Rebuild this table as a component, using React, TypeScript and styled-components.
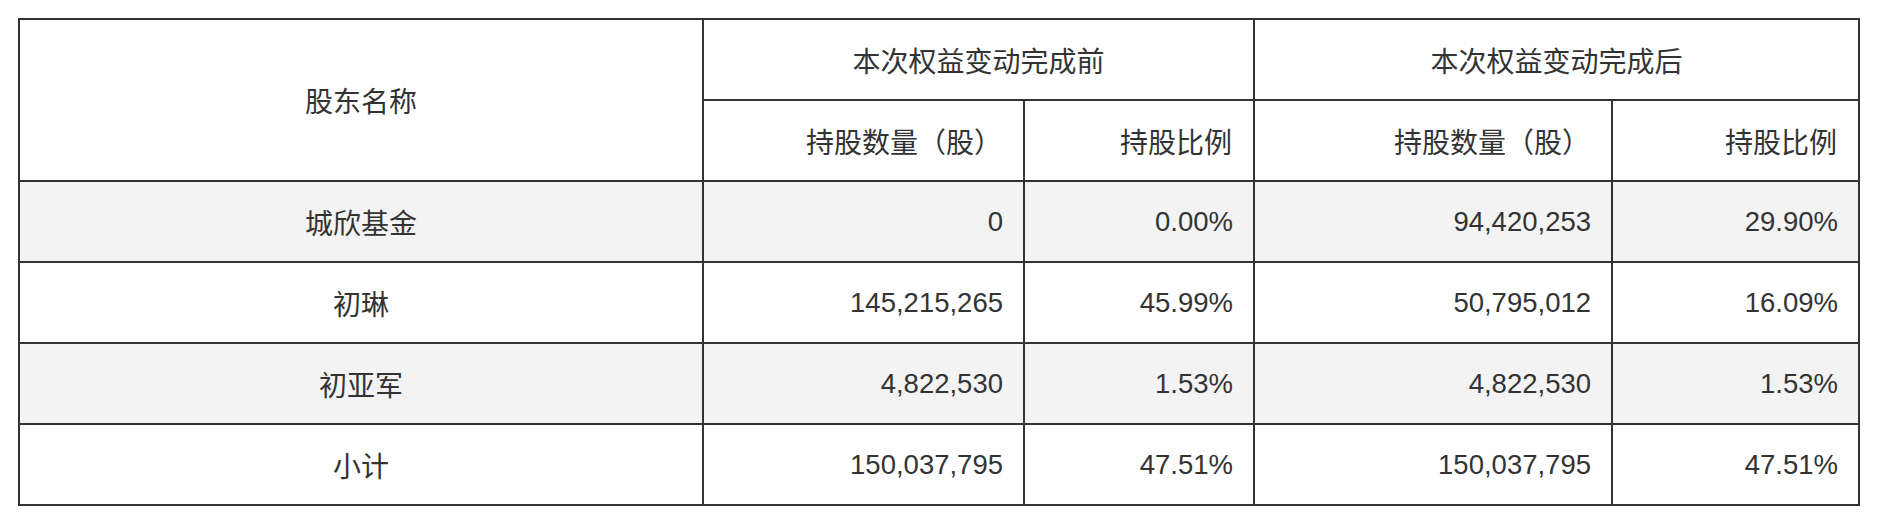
import React from 'react';
import styled, { createGlobalStyle } from 'styled-components';

const GlobalStyle = createGlobalStyle`
  html, body {
    margin: 0;
    padding: 0;
    background: #fff;
  }
  body {
    font-family: 'Liberation Sans', 'Noto Sans CJK SC', sans-serif;
    color: #333;
  }
`;

const Page = styled.div`
  padding: 18px;
`;

const Table = styled.table`
  width: 1842px;
  border-collapse: collapse;
  table-layout: fixed;
  font-size: 28px;
  color: #333;
`;

const Row = styled.tr<{ $shaded?: boolean }>`
  height: 81px;
  background: ${({ $shaded }) => ($shaded ? '#f3f3f3' : '#fff')};
`;

const HeadCell = styled.th<{ $align?: 'center' | 'right' }>`
  border: 2px solid #333;
  font-weight: normal;
  padding: 0 21px;
  text-align: ${({ $align }) => $align || 'center'};
  vertical-align: middle;
`;

const Cell = styled.td<{ $align?: 'center' | 'right'; $num?: boolean }>`
  border: 2px solid #333;
  padding: 0 20px;
  font-size: ${({ $num }) => ($num ? '27.5px' : '28px')};
  text-align: ${({ $align }) => $align || 'right'};
  vertical-align: middle;
  white-space: nowrap;
`;

interface Holder {
  name: string;
  beforeShares: string;
  beforeRatio: string;
  afterShares: string;
  afterRatio: string;
}

const holders: Holder[] = [
  { name: '城欣基金', beforeShares: '0', beforeRatio: '0.00%', afterShares: '94,420,253', afterRatio: '29.90%' },
  { name: '初琳', beforeShares: '145,215,265', beforeRatio: '45.99%', afterShares: '50,795,012', afterRatio: '16.09%' },
  { name: '初亚军', beforeShares: '4,822,530', beforeRatio: '1.53%', afterShares: '4,822,530', afterRatio: '1.53%' },
  { name: '小计', beforeShares: '150,037,795', beforeRatio: '47.51%', afterShares: '150,037,795', afterRatio: '47.51%' },
];

const App: React.FC = () => {
  return (
    <Page>
      <GlobalStyle />
      <Table>
        <colgroup>
          <col style={{ width: 684 }} />
          <col style={{ width: 321 }} />
          <col style={{ width: 230 }} />
          <col style={{ width: 358 }} />
          <col style={{ width: 247 }} />
        </colgroup>
        <thead>
          <Row>
            <HeadCell rowSpan={2}>股东名称</HeadCell>
            <HeadCell colSpan={2}>本次权益变动完成前</HeadCell>
            <HeadCell colSpan={2}>本次权益变动完成后</HeadCell>
          </Row>
          <Row>
            <HeadCell $align='right'>持股数量（股）</HeadCell>
            <HeadCell $align='right'>持股比例</HeadCell>
            <HeadCell $align='right'>持股数量（股）</HeadCell>
            <HeadCell $align='right'>持股比例</HeadCell>
          </Row>
        </thead>
        <tbody>
          {holders.map((h, i) => (
            <Row key={h.name} $shaded={i % 2 === 0}>
              <Cell $align='center'>{h.name}</Cell>
              <Cell $num>{h.beforeShares}</Cell>
              <Cell $num>{h.beforeRatio}</Cell>
              <Cell $num>{h.afterShares}</Cell>
              <Cell $num>{h.afterRatio}</Cell>
            </Row>
          ))}
        </tbody>
      </Table>
    </Page>
  );
};

export default App;
